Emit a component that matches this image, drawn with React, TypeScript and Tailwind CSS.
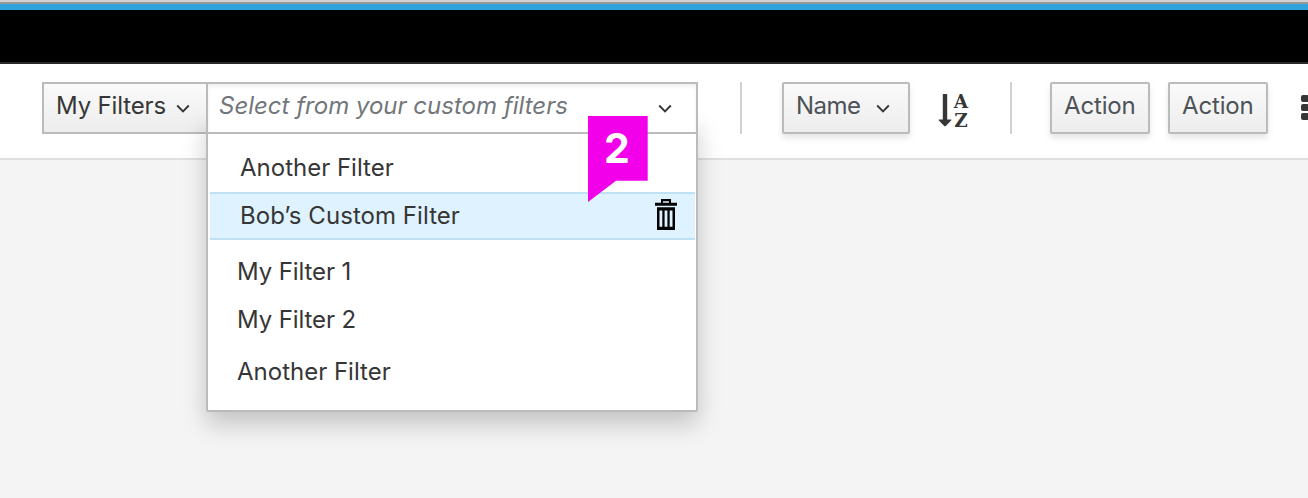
import React from "react";

function Chevron({ className = "" }: { className?: string }) {
  return (
    <svg className={className} width="14" height="9" viewBox="0 0 14 9" fill="none" stroke="#363636" strokeWidth="1.9">
      <path d="M1.2 1.5 L7 7.3 L12.8 1.5" />
    </svg>
  );
}

function Divider({ className = "" }: { className?: string }) {
  return <div className={`h-[52px] w-0.5 shrink-0 bg-[#d1d1d1] ${className}`} />;
}

function Button({ children, className = "" }: { children: React.ReactNode; className?: string }) {
  return (
    <button
      className={`flex h-[52px] shrink-0 items-start rounded-[2px] border-2 border-[#bbbbbb] bg-linear-to-b from-[#fafafa] to-[#ededed] pt-[7px] leading-[30px] text-[#4d5258] shadow-[0_4px_6px_rgba(3,3,3,0.1)] ${className}`}
    >
      {children}
    </button>
  );
}

function TrashIcon() {
  return (
    <svg className="-mt-0.5" width="22" height="32" viewBox="0 0 22 32" fill="#030303">
      <path fillRule="evenodd" d="M6 0 H16 V3.8 H22 V6.8 H0 V3.8 H6 Z M8 2.2 V3.8 H14 V2.2 Z" />
      <path fillRule="evenodd" d="M2 8.3 H20 V31 H2 Z M4.5 11.4 V27.8 H7.3 V11.4 Z M9.6 11.4 V27.8 H12.4 V11.4 Z M14.7 11.4 V27.8 H17.5 V11.4 Z" />
    </svg>
  );
}

function SortIcon() {
  return (
    <div className="mt-3 ml-[28px] flex h-[34px] w-8 shrink-0 text-[#363636]">
      <svg className="shrink-0" width="15" height="34" viewBox="0 0 15 34" fill="currentColor">
        <path d="M5.3 0 Q4.8 0 4.8 0.5 V25.5 H1.2 Q0.1 25.5 0.9 26.5 L6.2 31.9 Q7 32.6 7.8 31.9 L13.1 26.5 Q13.9 25.5 12.8 25.5 H9.2 V0.5 Q9.2 0 8.7 0 Z" />
      </svg>
      <div className="-mt-px flex w-4 flex-col items-center font-['DejaVu_Serif',serif] text-[18.5px] leading-[18.5px] font-bold">
        <span className="h-[18.5px]">A</span>
        <span className="h-[18.5px]">Z</span>
      </div>
    </div>
  );
}

function Callout() {
  return (
    <div className="absolute top-[34px] left-[382px] z-20 h-[86px] w-[60px]">
      <svg className="absolute inset-0" width="60" height="86" viewBox="0 0 60 86">
        <path d="M0 0 H59.7 V64.7 H28 L0 86 Z" fill="#f200ea" />
      </svg>
      <span className="absolute top-[8px] left-[16px] text-[41px] leading-[48px] font-bold text-white">2</span>
    </div>
  );
}

function FilterSelect() {
  return (
    <div className="relative -ml-0.5 h-[52px] w-[492px] shrink-0">
      <div className="absolute inset-x-0 top-[34px] h-[296px] rounded-[2px] border-2 border-[#bbbbbb] bg-white shadow-[0_12px_24px_rgba(3,3,3,0.2)]">
        <ul className="pt-[26px] text-[#363636]">
          <li className="flex h-12 items-center pl-[32px]">Another Filter</li>
          <li className="mr-px ml-0.5 flex h-12 items-center justify-between border-y-2 border-[#bee1f4] bg-[#def3ff] pr-[18px] pl-[30px]">
            <span className="tracking-[0.05px]">Bob’s Custom Filter</span>
            <TrashIcon />
          </li>
          <li className="mt-2 flex h-12 items-center pl-[29px] tracking-[-0.1px]">My Filter 1</li>
          <li className="flex h-12 items-center pl-[29px] tracking-[-0.1px]">My Filter 2</li>
          <li className="mt-1 flex h-12 items-center pl-[29px]">Another Filter</li>
        </ul>
      </div>
      <div className="relative flex h-[52px] items-start justify-between border-2 border-[#bbbbbb] bg-white pt-[7px] pr-[24px] pl-[11px] leading-[30px] text-[#72767b] italic shadow-[inset_0_3px_4px_rgba(3,3,3,0.06)]">
        <span className="whitespace-nowrap">Select from your custom filters</span>
        <Chevron className="mt-[13px]" />
      </div>
      <Callout />
    </div>
  );
}

export default function App() {
  return (
    <div className="h-[498px] w-full overflow-hidden bg-[#f4f4f4] font-[Inter,sans-serif] text-2xl">
      <div className="h-0.5 bg-[#d1d1d1]" />
      <div className="h-0.5 bg-[#999999]" />
      <div className="h-1.5 bg-[#30a2dc]" />
      <div className="h-[54px] border-b-2 border-[#292929] bg-black" />
      <header className="flex h-24 items-start border-b-2 border-[#dfdfdf] bg-white pt-[18px] pl-[42px]">
        <div className="flex h-[52px] w-[166px] shrink-0 items-start border-2 border-[#bbbbbb] bg-linear-to-b from-[#fafafa] to-[#ededed] pt-[7px] pl-3 leading-[30px] whitespace-nowrap text-[#363636]">
          <span className="w-[109px] tracking-[-0.15px]">My Filters</span>
          <Chevron className="mt-[13px] ml-[11px] shrink-0" />
        </div>
        <FilterSelect />
        <Divider className="ml-[42px]" />
        <Button className="ml-[40px] w-[128px] pl-3">
          <span className="w-[66px] text-left tracking-[-0.5px]">Name</span>
          <Chevron className="mt-[13px] ml-[14px]" />
        </Button>
        <SortIcon />
        <Divider className="ml-[40px]" />
        <Button className="ml-[38px] w-[100px] pl-3 tracking-[-0.15px]">Action</Button>
        <Button className="ml-[18px] w-[100px] pl-3 tracking-[-0.15px]">Action</Button>
        <svg className="mt-[13px] ml-[33px] shrink-0" width="7" height="26" viewBox="0 0 7 26" fill="#363636">
          <rect x="0" y="0" width="8" height="7" rx="2" />
          <rect x="0" y="9" width="8" height="7" rx="2" />
          <rect x="0" y="18" width="8" height="7" rx="2" />
        </svg>
      </header>
    </div>
  );
}
